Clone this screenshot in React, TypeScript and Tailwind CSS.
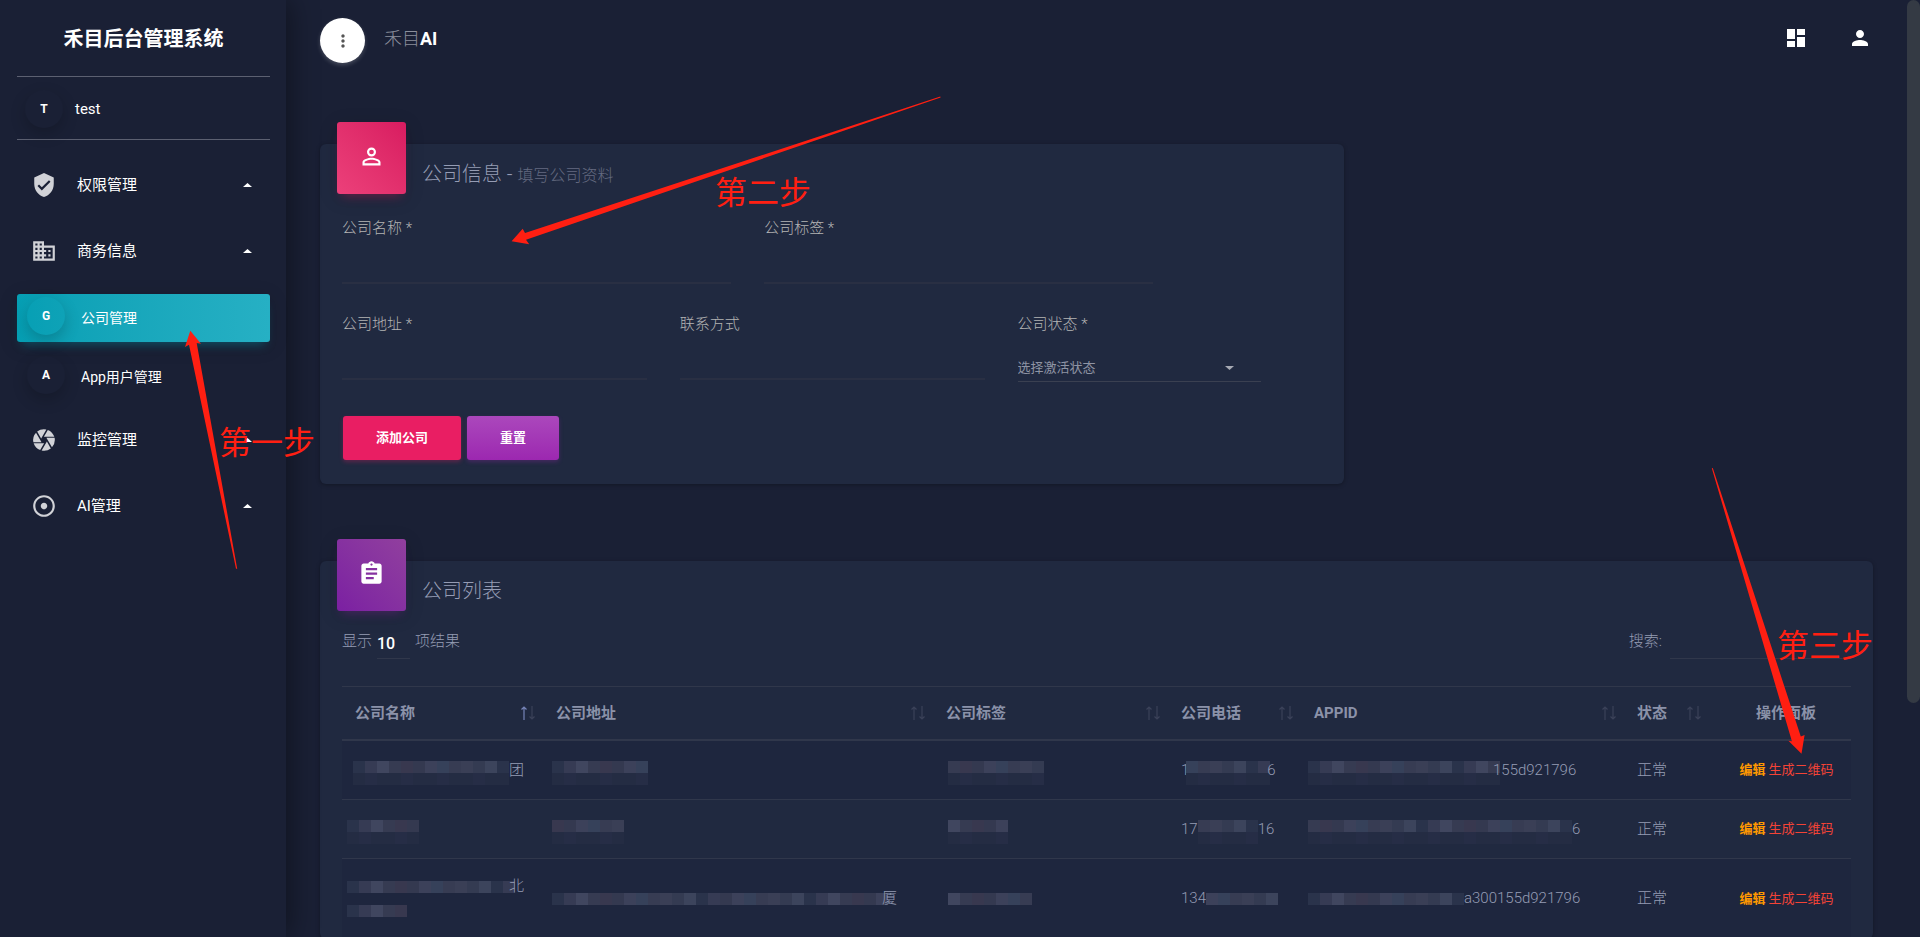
import type { ReactNode } from 'react';
import {
  MdAdjust,
  MdAssignment,
  MdBusiness,
  MdCamera,
  MdDashboard,
  MdMoreVert,
  MdPerson,
  MdPersonOutline,
  MdVerifiedUser,
} from 'react-icons/md';

const FAINT = '#242c43';

// Pixelated block that hides private values in the table
function Mosaic({ rows, className = '' }: { rows: string[][]; className?: string }) {
  const width = Math.max(...rows.map((row) => row.length)) * 12;
  return (
    <svg
      className={`shrink-0 ${className}`}
      width={width}
      height={rows.length * 12}
      shapeRendering="crispEdges"
      aria-hidden="true"
    >
      {rows.map((row, y) =>
        row.map((fill, x) => <rect key={`${x}-${y}`} x={x * 12} y={y * 12} width="12" height="12" fill={fill} />),
      )}
    </svg>
  );
}

const TONES = ['#2a334b', '#363b54', '#40465f', '#363b52', '#38384f', '#343950', '#3c415a', '#36415a', '#373c53', '#3a3f56', '#343b52', '#3c445c'];

function tones(count: number, start = 0) {
  return Array.from({ length: count }, (_, i) => TONES[(i + start) % TONES.length]);
}

function faint(count: number) {
  return Array.from({ length: count }, (_, i) => (i % 3 === 1 ? '#262d46' : FAINT));
}

function Caret({ up = false, className = '' }: { up?: boolean; className?: string }) {
  return (
    <svg className={className} width="9" height="4" viewBox="0 0 9 4" fill="currentColor" aria-hidden="true">
      <path d={up ? 'M4.5 0L9 4H0z' : 'M0 0h9L4.5 4z'} />
    </svg>
  );
}

function NavItem({ icon, label }: { icon: ReactNode; label: string }) {
  return (
    <a href="#" className="flex h-[66px] items-center pr-[18px] pl-[14px] text-[15px] text-white">
      <span className="text-[26px] text-[#d1d2d7]">{icon}</span>
      <span className="ml-5 flex-1">{label}</span>
      <Caret up />
    </a>
  );
}

function SubItem({ mini, label, active = false }: { mini: string; label: string; active?: boolean }) {
  return (
    <a
      href="#"
      className={`flex h-12 items-center rounded-[3px] pl-[10px] text-sm text-white ${
        active
          ? 'bg-linear-to-r from-[#059fb4] to-[#26b0c4] shadow-[0_4px_20px_rgba(0,0,0,0.14),0_7px_10px_-5px_rgba(0,188,212,0.4)]'
          : ''
      }`}
    >
      <span className="mb-1 flex size-[38px] items-center justify-center rounded-full text-xs font-bold shadow-[0_6px_16px_rgba(0,0,0,0.2)]">
        {mini}
      </span>
      <span className="ml-4">{label}</span>
    </a>
  );
}

function Card({ tone, icon, title, children }: { tone: string; icon: ReactNode; title: ReactNode; children: ReactNode }) {
  return (
    <section className="rounded-md bg-[#202940] shadow-[0_1px_4px_rgba(0,0,0,0.3)]">
      <header className="flex items-start px-[17px]">
        <div className={`-mt-[22px] flex h-[72px] w-[69px] items-center justify-center rounded-[3px] pb-1 text-[27px] text-white ${tone}`}>
          {icon}
        </div>
        <h2 className="mt-4 ml-4 text-xl leading-7 font-light text-[#959cb4]">{title}</h2>
      </header>
      <div className="px-[22px]">{children}</div>
    </section>
  );
}

function Field({ id, label }: { id: string; label: string }) {
  return (
    <>
      <label htmlFor={id} className="block text-[15px] leading-6 font-light text-[#b4b4b4]">
        {label}
      </label>
      <input id={id} className="h-11 w-full border-b-2 border-[#292f43] bg-transparent text-sm text-white outline-none" />
    </>
  );
}

function SortArrows({ sorted = false }: { sorted?: boolean }) {
  return (
    <svg className="shrink-0" width="16" height="16" viewBox="0 0 16 16" fill="none" strokeWidth="1.2" aria-hidden="true">
      <path d="M4 15V2M1.5 4.5L4 2l2.500 2.500" stroke={sorted ? '#7684b8' : '#3b4259'} />
      <path d="M12 1v13M9.500 11.500L12 14l2.500-2.500" stroke="#3b4259" />
    </svg>
  );
}

const columns = [
  { label: '公司名称', width: 'w-[201px]' },
  { label: '公司地址', width: '' },
  { label: '公司标签', width: 'w-[235px]' },
  { label: '公司电话', width: 'w-[133px]' },
  { label: 'APPID', width: 'w-[323px]' },
  { label: '状态', width: 'w-[85px]' },
];

const companies = [
  {
    name: (
      <div className="flex items-center">
        <Mosaic className="mt-1.5 -ml-0.5" rows={[tones(13), faint(13)]} />
        团
      </div>
    ),
    address: <Mosaic className="mt-1.5 -ml-1" rows={[tones(8), faint(8)]} />,
    tag: <Mosaic className="mt-1.5 ml-0.5" rows={[tones(8, 3), faint(8)]} />,
    phone: (
      <div className="flex items-center">
        1
        <Mosaic className="mt-1.5 -mx-[3px]" rows={[tones(7, 7), faint(7)]} />6
      </div>
    ),
    appId: (
      <div className="flex items-center">
        <Mosaic className="mt-1.5 -mr-[7px] -ml-1.5" rows={[tones(16), faint(16)]} />
        155d921796
      </div>
    ),
  },
  {
    name: <Mosaic className="mt-1.5 -ml-2" rows={[tones(6), faint(6)]} />,
    address: <Mosaic className="mt-1.5 -ml-1" rows={[tones(6, 4), faint(6)]} />,
    tag: <Mosaic className="mt-1.5 ml-0.5" rows={[tones(5, 2), faint(5)]} />,
    phone: (
      <div className="flex items-center">
        17
        <Mosaic className="mt-1.5" rows={[tones(5, 8), faint(5)]} />
        16
      </div>
    ),
    appId: (
      <div className="flex items-center">
        <Mosaic className="mt-1.5 -ml-1.5" rows={[tones(22, 3), faint(22)]} />6
      </div>
    ),
  },
  {
    name: (
      <>
        <div className="flex h-6 items-center">
          <Mosaic className="-ml-2" rows={[tones(14)]} />
          <span className="-ml-1.5">北</span>
        </div>
        <div className="flex h-6 items-center">
          <Mosaic className="-ml-2" rows={[tones(5)]} />
        </div>
      </>
    ),
    address: (
      <div className="flex items-center">
        <Mosaic className="-ml-1" rows={[[...tones(14), ...tones(14, 5)]]} />
        <span className="-ml-1.5">厦</span>
      </div>
    ),
    tag: <Mosaic className="ml-0.5" rows={[tones(7, 2)]} />,
    phone: (
      <div className="flex items-center">
        134
        <Mosaic className="-mr-1" rows={[tones(6, 6)]} />
      </div>
    ),
    appId: (
      <div className="flex items-center">
        <Mosaic className="-ml-1.5" rows={[tones(13)]} />
        a300155d921796
      </div>
    ),
  },
];

function Sidebar() {
  return (
    <aside className="relative w-[286px] shrink-0 pr-4 pl-[17px] shadow-[4px_0_26px_rgba(0,0,0,0.4)]">
      <h1 className="flex h-[76px] items-center justify-center pt-0.5 text-xl font-bold text-white">禾目后台管理系统</h1>
      <a href="#" className="flex h-16 items-center border-y border-[#5c6071] pt-0.5 pl-2 text-[15px] text-white">
        <span className="flex size-[38px] items-center justify-center rounded-full text-xs font-bold shadow-[0_6px_16px_rgba(0,0,0,0.2)]">
          T
        </span>
        <span className="ml-3">test</span>
      </a>
      <nav className="pt-3">
        <NavItem icon={<MdVerifiedUser />} label="权限管理" />
        <NavItem icon={<MdBusiness />} label="商务信息" />
        <div className="flex flex-col gap-[11px] pt-[10px] pb-[6px]">
          <SubItem mini="G" label="公司管理" active />
          <SubItem mini="A" label="App用户管理" />
        </div>
        <NavItem icon={<MdCamera />} label="监控管理" />
        <NavItem icon={<MdAdjust />} label="AI管理" />
      </nav>
    </aside>
  );
}

function CompanyForm() {
  return (
    <form className="pt-[22px] pb-6">
      <div className="grid grid-cols-12 gap-x-[33px]">
        <div className="col-span-5">
          <Field id="company-name" label="公司名称 *" />
        </div>
        <div className="col-span-5">
          <Field id="company-tag" label="公司标签 *" />
        </div>
      </div>
      <div className="mt-7 grid grid-cols-12 gap-x-[33px]">
        <div className="col-span-4">
          <Field id="company-address" label="公司地址 *" />
        </div>
        <div className="col-span-4">
          <Field id="company-contact" label="联系方式" />
        </div>
        <div className="col-span-4">
          <label htmlFor="company-state" className="block text-[15px] leading-6 font-light text-[#b4b4b4]">
            公司状态 *
          </label>
          <div className="relative mt-[18px] w-4/5">
            <select
              id="company-state"
              className="h-7 w-full appearance-none border-b border-[#3a4051] bg-transparent text-[13px] text-[#8f94a4] outline-none"
            >
              <option>选择激活状态</option>
            </select>
            <Caret className="absolute top-3 right-[27px] text-[#a6a9b3]" />
          </div>
        </div>
      </div>
      <div className="mt-[34px] ml-px flex gap-1.5">
        <button
          type="button"
          className="h-11 rounded-[3px] bg-[#e91e63] px-[33px] text-[13px] font-bold text-white shadow-[0_2px_4px_rgba(233,30,99,0.3)]"
        >
          添加公司
        </button>
        <button
          type="reset"
          className="h-11 rounded-[3px] bg-linear-to-b from-[#ab47bc] to-[#9c27b0] px-[33px] text-[13px] font-bold text-white shadow-[0_2px_4px_rgba(156,39,176,0.3)]"
        >
          重置
        </button>
      </div>
    </form>
  );
}

function CompanyTable() {
  return (
    <>
      <div className="mt-3 flex h-9 items-center text-[15px] font-light text-[#959cb4]">
        <label htmlFor="page-size">显示</label>
        <select
          id="page-size"
          className="mr-[5px] ml-[5px] h-9 w-[33px] appearance-none border-b border-[#30374b] bg-transparent pt-1.5 text-base font-medium text-white outline-none"
        >
          <option>10</option>
        </select>
        项结果
        <label htmlFor="search" className="ml-auto">
          搜索:
        </label>
        <input id="search" className="ml-2 h-9 w-[181px] border-b border-[#30374b] bg-transparent text-white outline-none" />
      </div>
      <table className="mt-[27px] w-full table-fixed border-separate border-spacing-0 text-left text-[15px] text-[#959cb4]">
        <thead className="text-[#8b92a9]">
          <tr>
            {columns.map((column, i) => (
              <th key={column.label} className={`h-[55px] border-t border-b-2 border-[#30374b] pr-[7px] pl-[13px] font-bold ${column.width}`}>
                <span className="flex items-center justify-between">
                  {column.label}
                  <SortArrows sorted={i === 0} />
                </span>
              </th>
            ))}
            <th className="w-[142px] border-t border-b-2 border-[#30374b] pl-3 text-center font-bold">操作面板</th>
          </tr>
        </thead>
        <tbody className="font-light [&_td]:border-b [&_td]:border-[#30374b] [&_td]:pl-[13px]">
          {companies.map((company, i) => (
            <tr key={i} className={`${i === 2 ? 'h-20' : 'h-[59px]'} ${i % 2 === 0 ? 'bg-[#1e263e]' : ''}`}>
              <td>{company.name}</td>
              <td>{company.address}</td>
              <td>{company.tag}</td>
              <td>{company.phone}</td>
              <td>{company.appId}</td>
              <td>正常</td>
              <td className="text-center text-[13px]">
                <a href="#" className="font-bold text-[#ff9800]">
                  编辑
                </a>{' '}
                <a href="#" className="font-normal text-[#f44336]">
                  生成二维码
                </a>
              </td>
            </tr>
          ))}
        </tbody>
      </table>
    </>
  );
}

// Red arrows and step captions drawn over the page
function Steps() {
  return (
    <div className="pointer-events-none absolute inset-0 text-[32px] leading-10 text-[#ff1f12]">
      <svg className="absolute top-0 left-0" width="1907" height="800" fill="currentColor" aria-hidden="true">
        <path d="M190.300 330.700L201 343.700l-4.300-.7L237.200 568.700h-1.200L189 344.700l-4 2.300z" />
        <path d="M511.600 241.300l11.100-12.600 2.300 4.300L940.300 96.600l.3 1L526 239.700l3.200 4.600z" />
        <path d="M1801.500 753.700l-13.100-13 3.500.6L1711.800 468.200l1-.3L1800.800 736.500l3.800-1.500z" />
      </svg>
      <span className="absolute top-[423px] left-[219px]">第一步</span>
      <span className="absolute top-[173px] left-[715px]">第二步</span>
      <span className="absolute top-[626px] left-[1777px]">第三步</span>
    </div>
  );
}

export default function App() {
  return (
    <div className="relative flex h-screen overflow-hidden bg-[#1a2035] font-[Roboto,'Noto_Sans_CJK_SC',sans-serif]">
      <Sidebar />
      <main className="min-w-0 flex-1 pr-[47px] pl-[34px]">
        <div className="flex h-[81px] items-center">
          <button
            type="button"
            aria-label="菜单"
            className="flex size-[45px] items-center justify-center rounded-full bg-white text-xl text-[#555555] shadow-[0_2px_4px_rgba(255,255,255,0.2)]"
          >
            <MdMoreVert />
          </button>
          <a href="#" className="mb-1 ml-[19px] text-lg font-light text-[#8b8f9c]">
            禾目<b className="font-bold text-white">AI</b>
          </a>
          <div className="mr-[1px] mb-1.5 ml-auto flex gap-10 text-2xl text-white">
            <button type="button" aria-label="仪表盘">
              <MdDashboard />
            </button>
            <button type="button" aria-label="用户">
              <MdPerson />
            </button>
          </div>
        </div>
        <div className="mt-[63px] grid grid-cols-12 gap-x-[33px] gap-y-[77px]">
          <div className="col-span-8">
            <Card
              tone="bg-linear-to-tr from-[#ec407a] to-[#d81b60] shadow-[0_4px_20px_rgba(0,0,0,0.14),0_7px_10px_-5px_rgba(233,30,99,0.4)]"
              icon={<MdPersonOutline />}
              title={
                <>
                  公司信息 - <small className="text-base text-[#656b81]">填写公司资料</small>
                </>
              }
            >
              <CompanyForm />
            </Card>
          </div>
          <div className="col-span-12">
            <Card
              tone="bg-linear-to-tr from-[#7b1fa2] to-[#913f9e] shadow-[0_4px_20px_rgba(0,0,0,0.14),0_7px_10px_-5px_rgba(156,39,176,0.4)]"
              icon={<MdAssignment />}
              title="公司列表"
            >
              <CompanyTable />
            </Card>
          </div>
        </div>
      </main>
      <div className="absolute top-0 right-0 h-3/4 w-[13px] rounded-full bg-[#343a44]" />
      <Steps />
    </div>
  );
}
